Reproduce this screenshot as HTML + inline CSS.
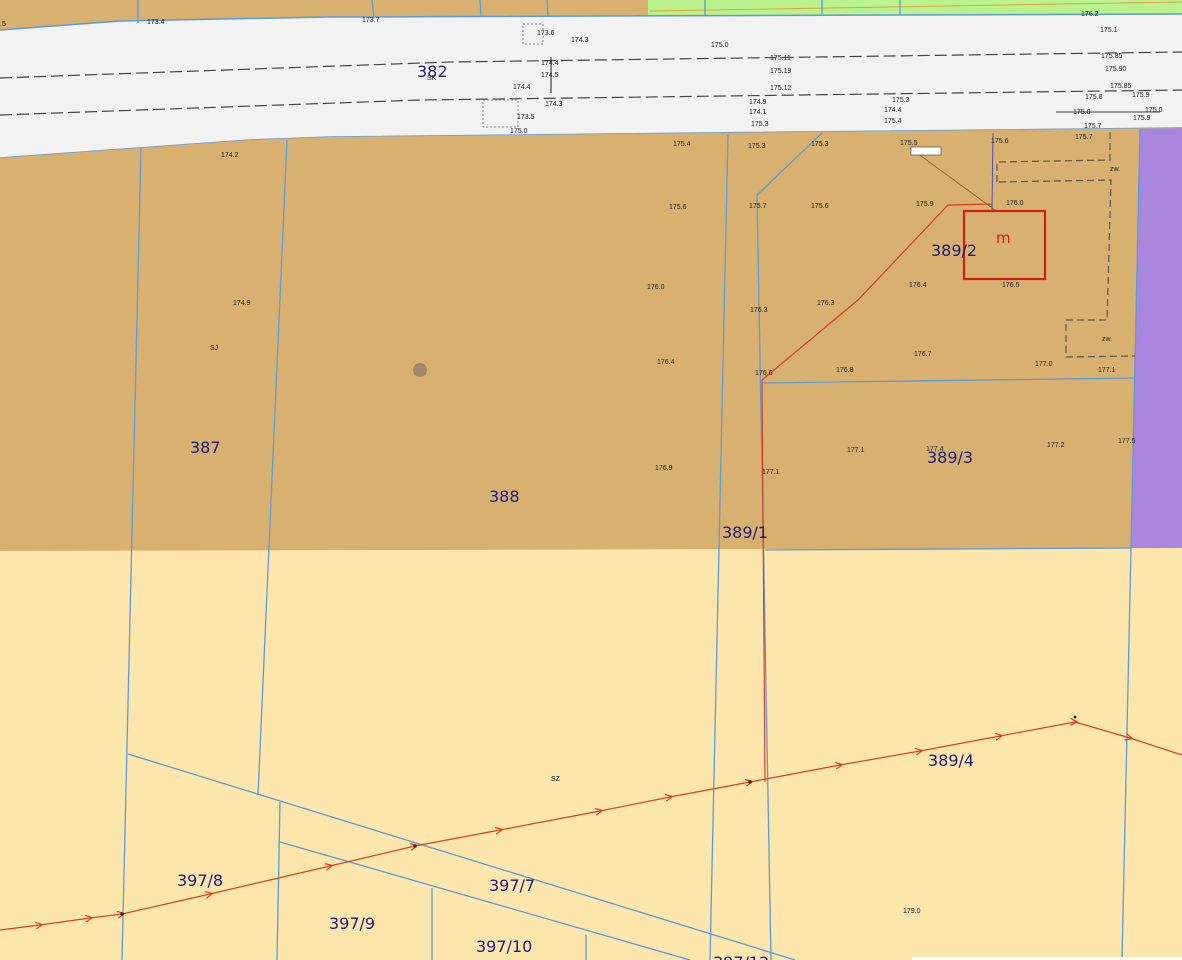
<!DOCTYPE html>
<html><head><meta charset="utf-8"><style>
html,body{margin:0;padding:0;width:1182px;height:960px;overflow:hidden;background:#fde6ab}
svg{display:block}
.s{font-family:"Liberation Sans",sans-serif;font-size:7px;fill:#222}
.b{font-family:"DejaVu Sans","Liberation Sans",sans-serif;font-size:16px;fill:#1e1a78}
</style></head><body>
<svg width="1182" height="960" viewBox="0 0 1182 960" xmlns="http://www.w3.org/2000/svg">
<defs>
<marker id="ar" markerWidth="8" markerHeight="6" refX="4" refY="3" orient="auto"><path d="M0,0 L6,3 L0,6" fill="none" stroke="#d84020" stroke-width="1"/></marker>
</defs>
<rect width="1182" height="960" fill="#fde6ab"/>
<polygon points="0,0 648,0 648,16 330,17 120,21 0,30" fill="#d8b070"/>
<polygon points="648,0 1182,0 1182,14 648,16" fill="#b9f18c"/>
<path d="M650,11 L1182,2" stroke="#e0a040" stroke-width="1" fill="none"/>
<polygon points="0,30 120,21 330,17 1182,14 1182,128 330,137 250,140 0,158" fill="#f2f2f2"/>
<path d="M0,30 L120,21 L330,17 L1182,14" stroke="#5b9bd5" stroke-width="1.5" fill="none"/>
<path d="M0,158 L250,140 L330,137 L1182,128" stroke="#5b9bd5" stroke-width="1.5" fill="none"/>
<path d="M0,78 L450,62 L1182,52" stroke="#444" stroke-width="1.2" stroke-dasharray="12,5" fill="none"/>
<path d="M0,115 L420,100 L1182,90" stroke="#444" stroke-width="1.2" stroke-dasharray="12,5" fill="none"/>
<rect x="523" y="24" width="20" height="20" fill="none" stroke="#666" stroke-width="0.8" stroke-dasharray="2,2"/>
<rect x="483" y="100" width="35" height="27" fill="none" stroke="#666" stroke-width="0.8" stroke-dasharray="2,2"/>
<path d="M551,57 L551,93" stroke="#222" stroke-width="1"/>
<path d="M1056,112 L1160,112" stroke="#444" stroke-width="1"/>
<polygon points="0,158 250,140 330,137 1182,128 1182,548 0,551" fill="#d8b070"/>
<polygon points="1140,129 1182,128 1182,548 1131,548" fill="#a987de"/>
<g stroke="#5b9bd5" stroke-width="1.3" fill="none">
<path d="M138,0 L138,23"/><path d="M372,0 L374,18"/><path d="M480,0 L481,17"/><path d="M547,0 L548,17"/>
<path d="M705,0 L705,15"/><path d="M822,0 L822,14"/><path d="M900,0 L900,14"/>
<path d="M141,148 L122,960"/>
<path d="M287,140 L258,795"/>
<path d="M728,135 L710,960"/>
<path d="M822,133 L757,195 L771,960"/>
<path d="M762,383 L1135,378"/>
<path d="M765,550 L1131,548"/>
<path d="M1140,129 L1131,548 L1122,960"/>
<path d="M128,754 L795,960"/>
<path d="M280,802 L277,960"/>
<path d="M280,842 L690,960"/>
<path d="M432,888 L432,960"/>
<path d="M586,935 L586,960"/>
</g>
<g stroke="#555" stroke-width="1.2" stroke-dasharray="7,4" fill="none">
<path d="M997,182 L997,162 L1110,160 L1110,130"/>
<path d="M999,182 L1111,180 L1107,320 L1066,320 L1066,357 L1135,356"/>
</g>
<g stroke="#d84020" stroke-width="1.2" fill="none">
<path d="M0,930 L40,925 L90,918 L122,914 L210,894 L330,866 L415,846 L500,830 L600,811 L670,797 L750,782 L840,765 L920,751 L1000,736 L1075,722 L1130,738 L1182,755" marker-mid="url(#ar)"/>
<path d="M762,380 L765,782"/>
<path d="M762,380 L858,300 L948,205 L992,204"/>
</g>
<circle cx="122" cy="914" r="1.8" fill="#333"/><circle cx="415" cy="846" r="1.8" fill="#333"/><circle cx="750" cy="782" r="1.8" fill="#333"/><circle cx="1075" cy="717" r="1.5" fill="#333"/>
<path d="M910,148 L995,210" stroke="#8a5a30" stroke-width="0.8"/>
<path d="M993,133 L992,210" stroke="#5050c0" stroke-width="1"/>
<rect x="964" y="211" width="81" height="68" fill="none" stroke="#d02010" stroke-width="2.2"/>
<rect x="911" y="147" width="30" height="8" fill="#fff" stroke="#333" stroke-width="0.6"/>
<circle cx="420" cy="370" r="7" fill="#a08868"/>
<rect x="912" y="957" width="270" height="3" fill="#fff"/>
<text class="b" x="417" y="77">382</text>
<text class="b" x="190" y="453">387</text>
<text class="b" x="489" y="502">388</text>
<text class="b" x="722" y="538">389/1</text>
<text class="b" x="931" y="256">389/2</text>
<text class="b" x="927" y="463">389/3</text>
<text class="b" x="928" y="766">389/4</text>
<text class="b" x="177" y="886">397/8</text>
<text class="b" x="489" y="891">397/7</text>
<text class="b" x="329" y="929">397/9</text>
<text class="b" x="476" y="952">397/10</text>
<text class="b" x="713" y="968">397/12</text>
<text x="996" y="243" font-family="DejaVu Sans,sans-serif" font-size="15" fill="#d02010">m</text>
<g class="s">
<text x="0" y="26">.5</text><text x="147" y="24">173.4</text><text x="362" y="22">173.7</text>
<text x="537" y="35">173.6</text><text x="571" y="42">174.3</text><text x="541" y="65">174.4</text><text x="541" y="77">174.5</text>
<text x="513" y="89">174.4</text><text x="545" y="106">174.3</text><text x="517" y="119">173.5</text><text x="510" y="133">175.0</text>
<text x="427" y="80">SK</text><text x="711" y="47">175.0</text><text x="770" y="60">175.11</text><text x="770" y="73">175.19</text>
<text x="770" y="90">175.12</text><text x="749" y="104">174.9</text><text x="749" y="114">174.1</text><text x="751" y="126">175.3</text>
<text x="892" y="102">175.3</text><text x="884" y="112">174.4</text><text x="884" y="123">175.4</text>
<text x="1081" y="16">176.2</text><text x="1100" y="32">175.1</text><text x="1101" y="58">175.85</text><text x="1105" y="71">175.90</text>
<text x="1110" y="88">175.85</text><text x="1085" y="99">175.8</text><text x="1132" y="97">175.9</text><text x="1073" y="114">175.0</text>
<text x="1145" y="112">175.0</text><text x="1133" y="120">175.9</text><text x="1084" y="128">175.7</text><text x="1075" y="139">175.7</text>
<text x="221" y="157">174.2</text><text x="673" y="146">175.4</text><text x="748" y="148">175.3</text><text x="811" y="146">175.3</text>
<text x="900" y="145">175.5</text><text x="991" y="143">175.6</text><text x="1110" y="171">zw.</text>
<text x="669" y="209">175.6</text><text x="749" y="208">175.7</text><text x="811" y="208">175.6</text><text x="916" y="206">175.9</text>
<text x="1006" y="205">176.0</text><text x="233" y="305">174.9</text><text x="647" y="289">176.0</text><text x="909" y="287">176.4</text>
<text x="1002" y="287">176.5</text><text x="817" y="305">176.3</text><text x="750" y="312">176.3</text><text x="1102" y="341">zw.</text>
<text x="210" y="350">SJ</text><text x="657" y="364">176.4</text><text x="914" y="356">176.7</text><text x="1035" y="366">177.0</text>
<text x="1098" y="372">177.1</text><text x="755" y="375">176.6</text><text x="836" y="372">176.8</text>
<text x="847" y="452">177.1</text><text x="926" y="451">177.4</text><text x="1047" y="447">177.2</text><text x="1118" y="443">177.5</text>
<text x="655" y="470">176.9</text><text x="762" y="474">177.1</text><text x="551" y="781">SZ</text><text x="903" y="913">179.0</text>
</g>
</svg>
</body></html>
